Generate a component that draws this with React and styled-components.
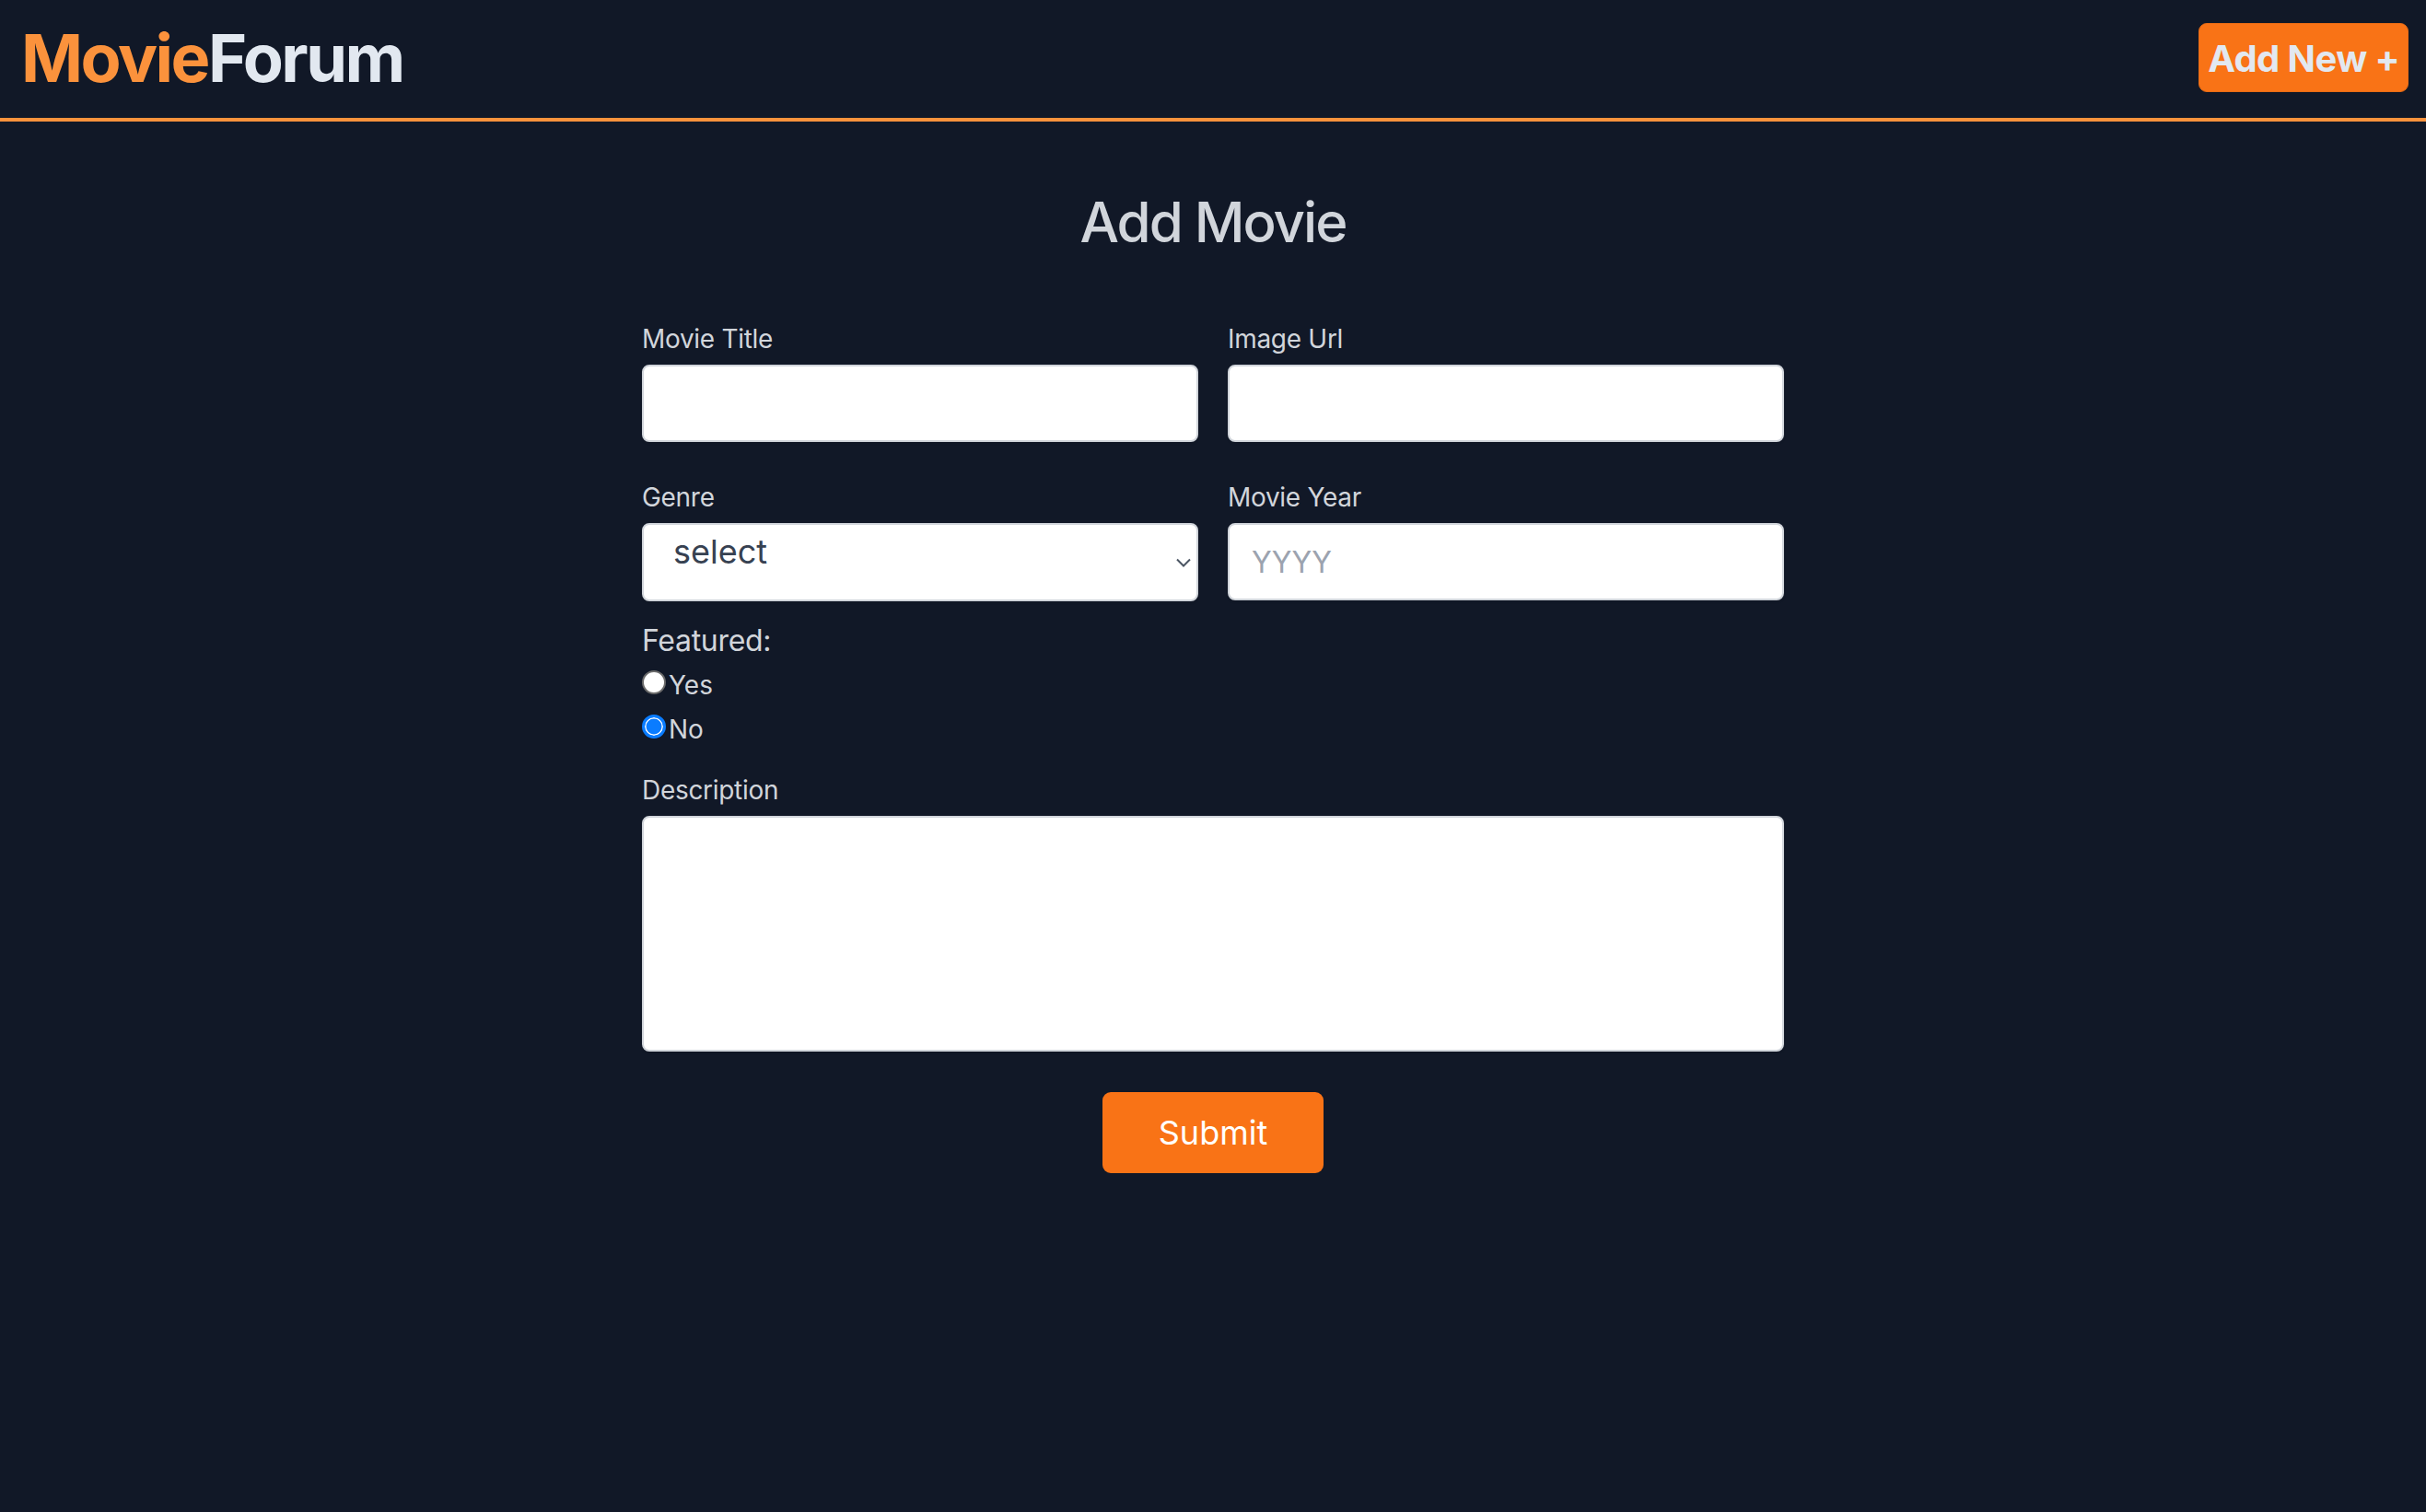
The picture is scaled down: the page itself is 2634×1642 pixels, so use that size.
import React from "react";
import styled, { createGlobalStyle } from "styled-components";

const GlobalStyle = createGlobalStyle`
  * {
    box-sizing: border-box;
  }
  body {
    margin: 0;
    background: #111827;
    font-family: Inter, "Noto Sans", "Liberation Sans", sans-serif;
    color: #d1d5db;
  }
`;

const Page = styled.div`
  min-height: 100vh;
  background: #111827;
`;

const Header = styled.header`
  height: 132px;
  display: flex;
  align-items: center;
  justify-content: space-between;
  padding: 0 19px 4px 23px;
  border-bottom: 4px solid #fb923c;
`;

const Logo = styled.h1`
  margin: 0;
  font-size: 72px;
  font-weight: 700;
  letter-spacing: -2.5px;
  color: #e2e8f0;
  span {
    color: #fb923c;
  }
`;

const AddButton = styled.button`
  font-family: inherit;
  font-size: 40px;
  font-weight: 700;
  line-height: 56px;
  letter-spacing: -0.6px;
  color: #e2e8f0;
  background: #f97316;
  border: 1px solid #ea6c14;
  border-radius: 9px;
  padding: 10px 9px 7px;
  cursor: pointer;
`;

const Main = styled.main`
  display: flex;
  flex-direction: column;
  align-items: center;
`;

const Title = styled.h2`
  margin: 73px 0 71px;
  font-size: 60px;
  line-height: 72px;
  font-weight: 500;
  letter-spacing: -2px;
  color: #d1d5db;
`;

const Form = styled.form`
  width: 1240px;
  display: flex;
  flex-direction: column;
`;

const Grid = styled.div`
  display: grid;
  grid-template-columns: 1fr 1fr;
  column-gap: 32px;
  row-gap: 40px;
`;

const Field = styled.div`
  display: flex;
  flex-direction: column;
  margin-top: ${({ $top }) => $top || 0}px;
`;

const Label = styled.label`
  font-size: 28px;
  line-height: 40px;
  letter-spacing: -0.3px;
  margin-bottom: 8px;
  color: #d1d5db;
`;

const boxStyle = `
  width: 100%;
  background: #ffffff;
  border: 2px solid #d1d5db;
  border-radius: 8px;
  box-shadow: 0 2px 3px rgba(0, 0, 0, 0.06);
  font-family: inherit;
  outline: none;
`;

const Input = styled.input`
  ${boxStyle}
  height: 84px;
  padding: 0 24px;
  font-size: 32px;
  color: #374151;
  &::placeholder {
    color: #9ca3af;
  }
`;

const SelectWrap = styled.div`
  position: relative;
  svg {
    position: absolute;
    right: 8px;
    top: 38px;
    pointer-events: none;
  }
`;

const Select = styled.select`
  ${boxStyle}
  appearance: none;
  height: 85px;
  padding: 0 40px 24px 32px;
  font-size: 36px;
  color: #374151;
`;

const TextArea = styled.textarea`
  ${boxStyle}
  height: 256px;
  resize: none;
  padding: 16px 24px;
  font-size: 32px;
`;

const Featured = styled.div`
  margin-top: 19px;
  display: flex;
  flex-direction: column;
`;

const Legend = styled.span`
  font-size: 32px;
  line-height: 48px;
  letter-spacing: -0.3px;
  color: #d1d5db;
`;

const RadioLabel = styled.label`
  display: block;
  font-size: 28px;
  line-height: 48px;
  color: #d1d5db;
`;

const Radio = styled.input`
  appearance: none;
  display: inline-block;
  width: 26px;
  height: 26px;
  margin: 0 3px 0 0;
  border-radius: 50%;
  border: 2px solid #6b6b6b;
  background: #ffffff;
  vertical-align: baseline;
  &:checked {
    border: 3px solid #0a7cff;
    background: #0a7cff;
    box-shadow: inset 0 0 0 1.5px #ffffff;
  }
`;

const SubmitRow = styled.div`
  display: flex;
  justify-content: center;
  margin-top: 44px;
`;

const Submit = styled.button`
  font-family: inherit;
  font-size: 36px;
  line-height: 56px;
  font-weight: 400;
  color: #ffffff;
  background: #f97316;
  border: none;
  border-radius: 9px;
  padding: 16px 61px;
  cursor: pointer;
`;

function Chevron() {
  return (
    <svg width="16" height="10" viewBox="0 0 16 10" fill="none">
      <path d="M1 1.5L8 8.5L15 1.5" stroke="#4b5563" strokeWidth="2" />
    </svg>
  );
}

export default function App() {
  return (
    <Page>
      <GlobalStyle />
      <Header>
        <Logo>
          <span>Movie</span>Forum
        </Logo>
        <AddButton>Add New +</AddButton>
      </Header>
      <Main>
        <Title>Add Movie</Title>
        <Form onSubmit={(e) => e.preventDefault()}>
          <Grid>
            <Field>
              <Label>Movie Title</Label>
              <Input type="text" />
            </Field>
            <Field>
              <Label>Image Url</Label>
              <Input type="text" />
            </Field>
            <Field>
              <Label>Genre</Label>
              <SelectWrap>
                <Select defaultValue="">
                  <option value="">select</option>
                  <option value="action">Action</option>
                  <option value="drama">Drama</option>
                  <option value="comedy">Comedy</option>
                </Select>
                <Chevron />
              </SelectWrap>
            </Field>
            <Field>
              <Label>Movie Year</Label>
              <Input type="text" placeholder="YYYY" />
            </Field>
          </Grid>
          <Featured>
            <Legend>Featured:</Legend>
            <RadioLabel>
              <Radio type="radio" name="featured" value="yes" />
              Yes
            </RadioLabel>
            <RadioLabel>
              <Radio type="radio" name="featured" value="no" defaultChecked />
              No
            </RadioLabel>
          </Featured>
          <Field $top={22}>
            <Label>Description</Label>
            <TextArea />
          </Field>
          <SubmitRow>
            <Submit type="submit">Submit</Submit>
          </SubmitRow>
        </Form>
      </Main>
    </Page>
  );
}
